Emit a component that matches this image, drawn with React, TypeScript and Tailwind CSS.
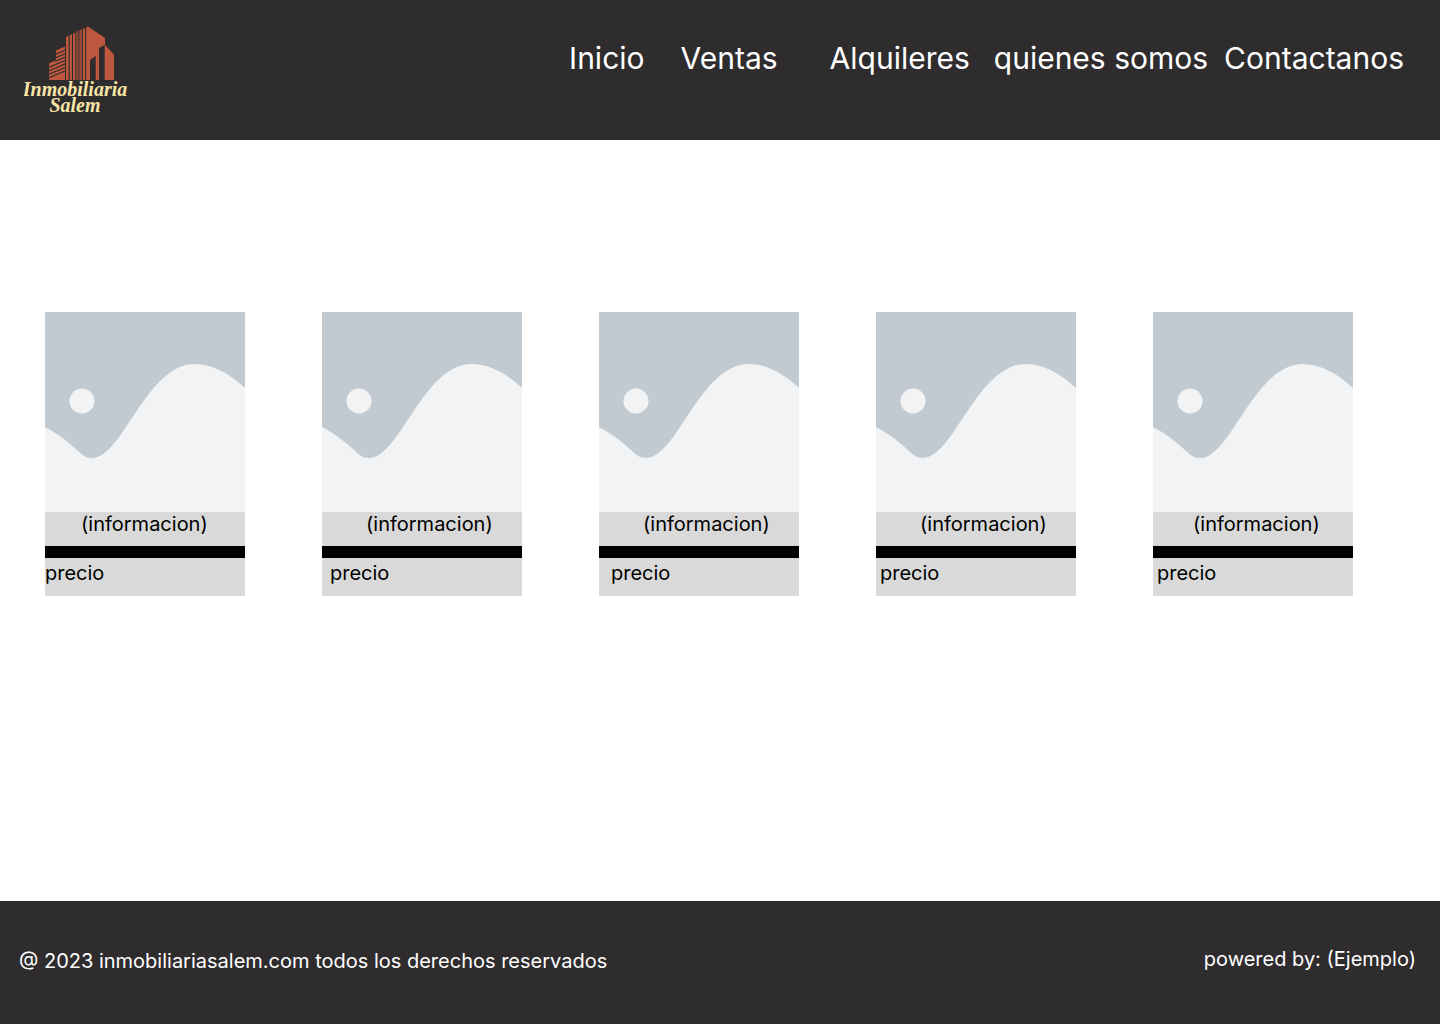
const navItems = [
  { label: "Inicio", space: "" },
  { label: "Ventas", space: "ml-9" },
  { label: "Alquileres", space: "ml-13" },
  { label: "quienes somos", space: "ml-6" },
  { label: "Contactanos", space: "ml-4" },
];

const listings = [
  { id: 1, info: "pl-9", price: "pl-0" },
  { id: 2, info: "pl-11", price: "pl-2" },
  { id: 3, info: "pl-11", price: "pl-3" },
  { id: 4, info: "pl-11", price: "pl-1" },
  { id: 5, info: "pl-10", price: "pl-1" },
];

function Logo() {
  return (
    <svg viewBox="0 0 106 96" className="h-24 w-[106px]" role="img" aria-label="Inmobiliaria Salem">
      <g fill="#bd573d">
        <path d="M42 17 L64 6.500 L81 18 V24.700 L75 28 V60 H71.700 V36 L66 40 V60 H42Z" />
        <path d="M80.700 24.700 L90 34.500 V60 H80.700Z" />
        <path d="M25 43.500 L32 40 V30.500 L41 26.500 V60 H25Z" />
      </g>
      <g stroke="#2e2c2d" strokeWidth="1.100" fill="none">
        <path d="M45.200 14 V60 M48.500 12 V60 M51.800 11 V60 M55 9 V60 M58.300 8 V60 M61.600 6 V60" />
        <path d="M31 34.500 L41 30.200 M31 38 L41 33.700 M31 41.500 L41 37.200 M25 47.300 L41 40.400 M25 50.800 L41 43.900 M25 54.300 L41 47.400 M25 57.800 L41 50.900" />
      </g>
      <path d="M53.400 10 V60 M57 9 V60" stroke="#7e4235" strokeWidth="1" />
      <g
        fill="#f8e4a5"
        textAnchor="middle"
        fontFamily="'Liberation Serif', serif"
        fontStyle="italic"
        fontWeight="700"
        fontSize="20"
      >
        <text x="51" y="76">Inmobiliaria</text>
        <text x="51" y="92">Salem</text>
      </g>
    </svg>
  );
}

function Placeholder() {
  return (
    <svg viewBox="0 0 200 200" className="block w-full" role="img" aria-label="Imagen de la propiedad">
      <path d="M0 0H200V200H0Z" fill="#c2cad1" />
      <path
        d="M0 115C14 122 24 131 37 142.500C40 145 43 146 47 146C78 146 101 52 150 52C167 52 184 61 200 76V200H0Z"
        fill="#f1f3f5"
      />
      <circle cx="37" cy="89" r="12.500" fill="#f1f3f5" />
    </svg>
  );
}

export default function App() {
  return (
    <div className="flex min-h-screen flex-col bg-white font-['Inter',sans-serif] text-xl text-black">
      <header className="flex items-start justify-between bg-[#2e2c2d] pt-5 pr-9 pb-6 pl-6 text-white">
        <a href="#inicio">
          <Logo />
        </a>
        <nav className="flex pt-4 text-3xl leading-[44px]">
          {navItems.map((item) => (
            <a key={item.label} href="#" className={item.space}>
              {item.label}
            </a>
          ))}
        </nav>
      </header>

      <main className="grid flex-1 grid-cols-5 content-start gap-[77px] pt-[172px] pr-[87px] pb-10 pl-[45px]">
        {listings.map((listing) => (
          <article key={listing.id}>
            <Placeholder />
            <div className="bg-[#d9d9d9]">
              <p className={listing.info}>
                <span className="block h-[34px] leading-6">(informacion)</span>
              </p>
              <hr className="h-3 border-0 bg-black" />
              <p className={listing.price}>
                <span className="block h-[38px] leading-[30px]">precio</span>
              </p>
            </div>
          </article>
        ))}
      </main>

      <footer className="flex items-start justify-between bg-[#2e2c2d] pt-11 pr-6 pb-[49px] pl-[19px] leading-7 text-white">
        <p className="pt-0.5">@ 2023 inmobiliariasalem.com todos los derechos reservados</p>
        <p>powered by: (Ejemplo)</p>
      </footer>
    </div>
  );
}
